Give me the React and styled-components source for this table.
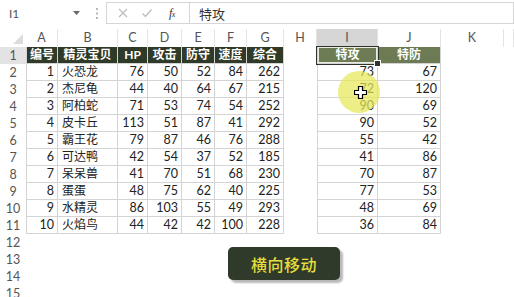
import React from 'react';
import styled, { createGlobalStyle, css } from 'styled-components';

const Global = createGlobalStyle`
  html, body { margin: 0; padding: 0; background: #fff; }
  body {
    width: 514px; height: 297px; overflow: hidden;
    font-family: Lato, "Noto Sans CJK SC", sans-serif;
  }
`;

const Page = styled.div`
  position: relative;
  width: 514px;
  height: 297px;
  overflow: hidden;
  background: #fff;
`;

/* ---------- formula bar ---------- */
const FormulaBar = styled.div`
  display: flex;
  align-items: stretch;
  height: 29px;
  padding: 2px 0 5px 0;
  box-sizing: border-box;
`;

const NameBox = styled.div`
  width: 88px;
  box-sizing: border-box;
  display: flex;
  align-items: center;
  justify-content: space-between;
  padding: 0 8px 0 9px;
  font-size: 12px;
  color: #555;
`;

const Grip = styled.div`
  width: 18px;
  display: flex;
  align-items: center;
  justify-content: center;
`;

const FxBox = styled.div`
  width: 84px;
  box-sizing: border-box;
  border: 1px solid #d6d6d6;
  display: flex;
  align-items: center;
  padding-left: 10px;
  gap: 12px;
`;

const FxText = styled.span`
  font-family: "Liberation Serif", serif;
  font-style: italic;
  font-size: 12px;
  color: #333;
  margin-left: 4px;
  letter-spacing: -0.5px;
  sub { font-size: 8px; vertical-align: baseline; }
`;

const FormulaInput = styled.div`
  flex: 1;
  border: 1px solid #d6d6d6;
  border-left: none;
  display: flex;
  align-items: center;
  padding-left: 9px;
  font-size: 13px;
  color: #333;
`;

/* ---------- sheet ---------- */
const Sheet = styled.div`
  position: relative;
  display: grid;
  grid-template-columns: 26px 32px 60px 30px 34px 33px 32px 37px 33px 61px 63px 63px 1fr;
  grid-template-rows: 18px repeat(15, 17px);
`;

const Corner = styled.div`
  display: flex;
  align-items: flex-end;
  justify-content: flex-end;
  padding: 0 3px 3px 0;
`;

const ColHead = styled.div`
  box-sizing: border-box;
  border-right: 1px solid #e4e4e4;
  background: ${p => (p.$selected ? '#d5d5d5' : '#fff')};
  color: #555;
  font-size: 12.5px;
  line-height: 18px;
  text-align: center;
`;

const RowHead = styled.div`
  background: ${p => (p.$selected ? '#e3e3e3' : '#fff')};
  color: #555;
  font-size: 12.5px;
  line-height: 17px;
  text-align: center;
`;

const kinds = {
  head: css`
    background: #2f3a28;
    color: #fff;
    font-weight: 700;
    font-size: 12px;
    text-align: center;
  `,
  accent: css`
    background: #6c7b54;
    color: #fff;
    font-weight: 700;
    font-size: 12px;
    text-align: center;
  `,
  num: css`
    color: #222;
    font-size: 12.5px;
    text-align: right;
    padding-right: 3px;
  `,
  name: css`
    color: #222;
    font-size: 12px;
    text-align: left;
    padding-left: 4px;
  `,
};

const Cell = styled.div`
  position: relative;
  box-sizing: border-box;
  border-right: 1px solid #d4d4d4;
  border-bottom: 1px solid #d4d4d4;
  ${p => p.$first && 'border-left: 1px solid #d4d4d4;'}
  line-height: 16px;
  white-space: nowrap;
  ${p => kinds[p.$kind]}
  ${p =>
    p.$active &&
    css`
      box-shadow: inset 0 0 0 1px #e8ecdf, 0 0 0 1px #2f332b;
      z-index: 1;
      &::after {
        content: '';
        position: absolute;
        right: -4px;
        bottom: -4px;
        width: 5px;
        height: 5px;
        background: #2f332b;
        border: 1px solid #fff;
      }
    `}
`;

const Blank = styled.div``;

const Highlight = styled.div`
  position: absolute;
  left: 338px;
  top: 42px;
  width: 42px;
  height: 42px;
  border-radius: 50%;
  background: rgba(232, 232, 88, 0.72);
  pointer-events: none;
`;

const Pointer = styled.svg`
  position: absolute;
  left: 354px;
  top: 57px;
`;

const ActionButton = styled.div`
  position: absolute;
  left: 228px;
  top: 247px;
  width: 112px;
  height: 33px;
  border-radius: 5px;
  background: #2f3a2b;
  box-shadow: 3px 3px 2px rgba(0, 0, 0, 0.28);
  display: flex;
  align-items: center;
  justify-content: center;
  color: #e4de3c;
  font-family: "Noto Sans CJK SC", sans-serif;
  font-size: 16px;
  font-weight: 500;
  letter-spacing: 0.5px;
`;

const letters = ['A', 'B', 'C', 'D', 'E', 'F', 'G', 'H', 'I', 'J', 'K', ''];
const head = ['编号', '精灵宝贝', 'HP', '攻击', '防守', '速度', '综合'];
const data = [
  [1, '火恐龙', 76, 50, 52, 84, 262, 73, 67],
  [2, '杰尼龟', 44, 40, 64, 67, 215, 72, 120],
  [3, '阿柏蛇', 71, 53, 74, 54, 252, 90, 69],
  [4, '皮卡丘', 113, 51, 87, 41, 292, 90, 52],
  [5, '霸王花', 79, 87, 46, 76, 288, 55, 42],
  [6, '可达鸭', 42, 54, 37, 52, 185, 41, 86],
  [7, '呆呆兽', 41, 70, 51, 68, 230, 70, 87],
  [8, '蛋蛋', 48, 75, 62, 40, 225, 77, 53],
  [9, '水精灵', 86, 103, 55, 49, 293, 48, 69],
  [10, '火焰鸟', 44, 42, 42, 100, 228, 36, 84],
];

function renderRow(r) {
  const cells = [<RowHead key="h" $selected={r === 1}>{r}</RowHead>];
  if (r === 1) {
    head.forEach((t, i) => cells.push(<Cell key={'a' + i} $kind="head" $first={i === 0}>{t}</Cell>));
    cells.push(<Blank key="H" />);
    cells.push(<Cell key="I" $kind="accent" $first $active>特攻</Cell>);
    cells.push(<Cell key="J" $kind="accent">特防</Cell>);
  } else if (r <= 11) {
    const d = data[r - 2];
    d.slice(0, 7).forEach((v, i) =>
      cells.push(
        <Cell key={'a' + i} $kind={i === 1 ? 'name' : 'num'} $first={i === 0}>{v}</Cell>
      )
    );
    cells.push(<Blank key="H" />);
    cells.push(<Cell key="I" $kind="num" $first>{d[7]}</Cell>);
    cells.push(<Cell key="J" $kind="num">{d[8]}</Cell>);
  } else {
    for (let i = 0; i < 10; i++) cells.push(<Blank key={'b' + i} />);
  }
  cells.push(<Blank key="K" />);
  cells.push(<Blank key="L" />);
  return cells;
}

export default function App() {
  return (
    <Page>
      <Global />
      <FormulaBar>
        <NameBox>
          <span>I1</span>
          <svg width="7" height="4" viewBox="0 0 7 4"><path d="M0 0h7L3.5 4z" fill="#666" /></svg>
        </NameBox>
        <Grip>
          <svg width="2" height="11" viewBox="0 0 2 11">
            <rect x="0" y="0" width="2" height="2" fill="#b8b8b8" />
            <rect x="0" y="4.5" width="2" height="2" fill="#b8b8b8" />
            <rect x="0" y="9" width="2" height="2" fill="#b8b8b8" />
          </svg>
        </Grip>
        <FxBox>
          <svg width="12" height="12" viewBox="0 0 12 12">
            <path d="M2 2l8 8M10 2l-8 8" stroke="#bdbdbd" strokeWidth="1.3" />
          </svg>
          <svg width="12" height="12" viewBox="0 0 12 12">
            <path d="M1.5 6.5l3 3 6-7" stroke="#bdbdbd" strokeWidth="1.3" fill="none" />
          </svg>
          <FxText>f<sub>x</sub></FxText>
        </FxBox>
        <FormulaInput>特攻</FormulaInput>
      </FormulaBar>
      <Sheet>
        <Corner>
          <svg width="10" height="10" viewBox="0 0 10 10"><path d="M10 0V10H0z" fill="#dcdcdc" /></svg>
        </Corner>
        {letters.map((l, i) => (
          <ColHead key={i} $selected={l === 'I'}>{l}</ColHead>
        ))}
        {Array.from({ length: 15 }, (_, i) => renderRow(i + 1))}
        <Highlight />
        <Pointer width="13" height="13" viewBox="0 0 13 13">
          <path
            d="M4.5 0.5h4v4h4v4h-4v4h-4v-4h-4v-4h4z"
            fill="#fff"
            stroke="#000"
            strokeWidth="1.2"
          />
        </Pointer>
      </Sheet>
      <ActionButton>横向移动</ActionButton>
    </Page>
  );
}
